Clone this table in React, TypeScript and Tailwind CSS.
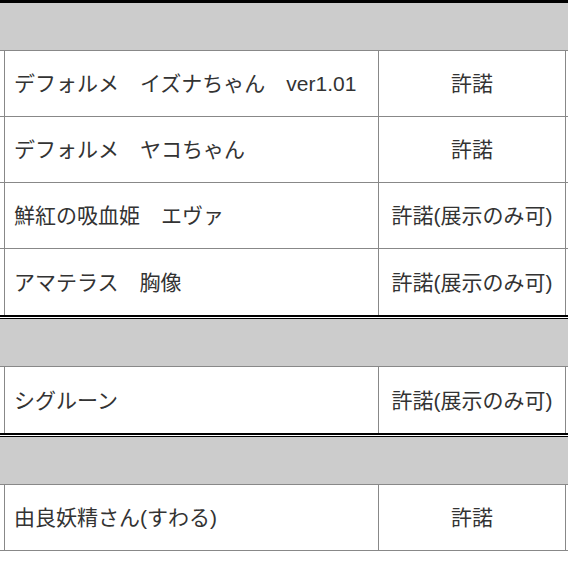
import React from "react"

interface Item {
  name: string
  status: string
}

interface Section {
  items: Item[]
}

const sections: Section[] = [
  {
    items: [
      { name: "デフォルメ　イズナちゃん　ver1.01", status: "許諾" },
      { name: "デフォルメ　ヤコちゃん", status: "許諾" },
      { name: "鮮紅の吸血姫　エヴァ", status: "許諾(展示のみ可)" },
      { name: "アマテラス　胸像", status: "許諾(展示のみ可)" },
    ],
  },
  {
    items: [{ name: "シグルーン", status: "許諾(展示のみ可)" }],
  },
  {
    items: [{ name: "由良妖精さん(すわる)", status: "許諾" }],
  },
]

function Separator({ first }: { first: boolean }) {
  if (first) {
    return <div className="h-[3px] bg-black" />
  }
  return (
    <div className="flex flex-col">
      <div className="h-[2px] bg-black" />
      <div className="h-[1px] bg-white" />
      <div className="h-[1px] bg-black" />
    </div>
  )
}

function Row({ item, last }: { item: Item; last: boolean }) {
  return (
    <div className={`flex h-[66px] ${last ? "" : "border-b border-[#888]"}`}>
      <div className="w-[4px] shrink-0" />
      <div className="flex w-[374px] shrink-0 items-center border-l border-[#888] pl-[9px]">
        {item.name}
      </div>
      <div className="flex w-[187px] shrink-0 items-center justify-center border-l border-[#888]">
        {item.status}
      </div>
      <div className="flex-1 border-l border-[#888]" />
    </div>
  )
}

export default function App() {
  return (
    <div
      className="h-[567px] w-[568px] overflow-hidden bg-white text-[21px] leading-none text-[#333]"
      style={{ fontFamily: '"Liberation Sans", "Noto Sans CJK JP", sans-serif' }}
    >
      {sections.map((section, i) => (
        <div key={i}>
          <Separator first={i === 0} />
          <div className="h-[48px] border-b border-[#888] bg-[#cccccc]" />
          {section.items.map((item, j) => (
            <Row
              key={j}
              item={item}
              last={j === section.items.length - 1 && i !== sections.length - 1}
            />
          ))}
        </div>
      ))}
    </div>
  )
}
